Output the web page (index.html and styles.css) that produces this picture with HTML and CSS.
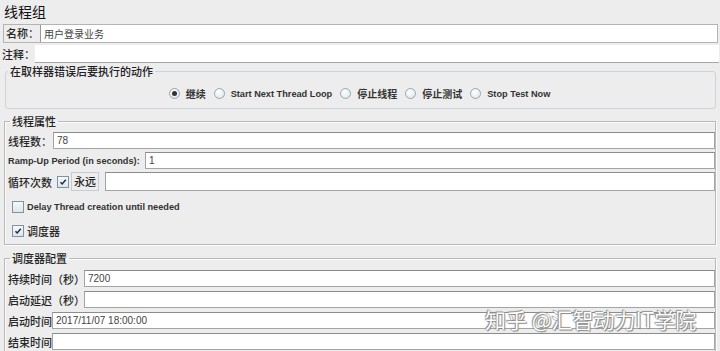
FILE: index.html
```html
<!DOCTYPE html>
<html lang="zh">
<head>
<meta charset="utf-8">
<title>线程组</title>
<link rel="stylesheet" href="styles.css">
</head>
<body>
<div class="page">
  <div class="title">线程组</div>

  <div class="name-row">
    <span class="lbl">名称：</span>
    <div class="field name-field">用户登录业务</div>
  </div>

  <div class="comment-row">
    <span class="lbl">注释：</span>
    <div class="field comment-field"></div>
  </div>

  <fieldset class="group err">
    <legend>在取样器错误后要执行的动作</legend>
    <div class="radios">
      <span class="opt"><span class="radio on"></span>继续</span>
      <span class="opt latin"><span class="radio"></span>Start Next Thread Loop</span>
      <span class="opt"><span class="radio"></span>停止线程</span>
      <span class="opt"><span class="radio"></span>停止测试</span>
      <span class="opt latin"><span class="radio"></span>Stop Test Now</span>
    </div>
  </fieldset>

  <fieldset class="group etched thread">
    <legend>线程属性</legend>
    <div class="frow r1">
      <span class="lbl">线程数：</span>
      <div class="field">78</div>
    </div>
    <div class="frow r2">
      <span class="lbl en">Ramp-Up Period (in seconds):</span>
      <div class="field">1</div>
    </div>
    <div class="frow r3">
      <span class="lbl">循环次数</span>
      <span class="check on"><svg viewBox="0 0 10 10" width="10" height="10"><path d="M2.5 5.2 L4.2 7 L7.8 2.8" fill="none" stroke="#1b2b3c" stroke-width="1.4"/></svg></span>
      <span class="forever">永远</span>
      <div class="field loop-field"></div>
    </div>
    <div class="crow delay">
      <span class="check"></span>
      <span class="en">Delay Thread creation until needed</span>
    </div>
    <div class="crow sched-toggle">
      <span class="check on"><svg viewBox="0 0 10 10" width="10" height="10"><path d="M2.5 5.2 L4.2 7 L7.8 2.8" fill="none" stroke="#1b2b3c" stroke-width="1.4"/></svg></span>
      <span class="lbl">调度器</span>
    </div>
  </fieldset>

  <fieldset class="group etched sched">
    <legend>调度器配置</legend>
    <div class="frow s1">
      <span class="lbl">持续时间（秒）</span>
      <div class="field">7200</div>
    </div>
    <div class="frow s2">
      <span class="lbl">启动延迟（秒）</span>
      <div class="field"></div>
    </div>
    <div class="frow s3">
      <span class="lbl">启动时间</span>
      <div class="field">2017/11/07 18:00:00</div>
    </div>
    <div class="frow s4">
      <span class="lbl">结束时间</span>
      <div class="field"></div>
    </div>
  </fieldset>

  <div class="watermark">知乎 @汇智动力IT学院</div>
</div>
</body>
</html>
```

FILE: styles.css
```css
html, body {
  margin: 0;
  padding: 0;
  background: #ededed;
}
.page {
  position: relative;
  width: 720px;
  height: 351px;
  overflow: hidden;
  font-family: "Noto Sans CJK SC", "Liberation Sans", sans-serif;
  font-size: 11px;
  color: #222;
  background: #ededed;
}
.title {
  height: 24px;
  line-height: 22px;
  padding-left: 4px;
  font-size: 14px;
  color: #111;
}
.lbl {
  white-space: nowrap;
  color: #262626;
  font-weight: 500;
  flex: none;
}
.en {
  font-family: "Liberation Sans", "Noto Sans CJK SC", sans-serif;
  font-weight: bold;
  font-size: 9.2px;
  color: #333;
  white-space: nowrap;
}
.field {
  background: #fff;
  border: 1px solid #a4a4a4;
  border-top-color: #8c8c8c;
  box-sizing: border-box;
  flex: 1;
  min-width: 0;
  padding-left: 3px;
  font-family: "Liberation Sans", "Noto Sans CJK SC", sans-serif;
  font-size: 10px;
  color: #444;
  line-height: 15px;
}
.name-row {
  display: flex;
  align-items: stretch;
  margin: 0 2px 0 3px;
  height: 19px;
  border: 1px solid #b4b4b4;
  box-sizing: border-box;
}
.name-row .lbl {
  width: 34px;
  padding-left: 2px;
  line-height: 17px;
}
.name-row .field {
  border: none;
  border-left: 1px solid #9a9a9a;
  font-family: "Noto Sans CJK SC", sans-serif;
  line-height: 17px;
}
.comment-row {
  display: flex;
  margin: 2px 1px 0 0;
  height: 18px;
}
.comment-row .lbl {
  width: 33px;
  padding-left: 2px;
  line-height: 18px;
}
.comment-row .field {
  border: none;
  border-bottom: 1px solid #a8a8a8;
}
.group {
  margin: 0 4px 0 4px;
  padding: 0 0 0 4px;
  min-width: 0;
}
.group legend {
  padding: 0 2px;
  margin-left: 2px;
  font-size: 11px;
  font-weight: 500;
  line-height: 14px;
  color: #222;
}
.err {
  margin-top: 1px;
  margin-left: 5px;
  height: 45px;
  border: 1px solid #cbd3db;
  border-radius: 3px;
  box-sizing: border-box;
  padding: 0;
}
.radios {
  display: flex;
  justify-content: center;
  align-items: center;
  gap: 8px;
  padding-top: 8px;
  padding-right: 2px;
}
.opt {
  display: flex;
  align-items: center;
  gap: 6px;
  font-weight: bold;
  font-size: 10px;
  color: #333;
  white-space: nowrap;
}
.opt.latin {
  font-family: "Liberation Sans", sans-serif;
  font-size: 9.2px;
}
.radio {
  display: inline-block;
  flex: none;
  width: 9px;
  height: 9px;
  border-radius: 50%;
  border: 1px solid #9aa6b2;
  background: radial-gradient(circle at 40% 35%, #ffffff 0%, #dde4ea 90%);
  position: relative;
}
.radio.on::after {
  content: "";
  position: absolute;
  left: 2px;
  top: 2px;
  width: 5px;
  height: 5px;
  border-radius: 50%;
  background: #333;
}
.etched {
  border: 1px solid #b9b9b9;
  box-shadow: inset 1px 1px 0 #fbfbfb, 1px 1px 0 #fbfbfb;
  border-radius: 0;
}
.thread {
  margin-top: 5px;
  height: 131px;
  box-sizing: border-box;
  padding: 4px 0 0 3px;
}
.frow {
  display: flex;
  align-items: center;
  height: 17px;
  margin-bottom: 3px;
}
.frow .field {
  height: 17px;
  align-self: stretch;
}
.frow .lbl {
  padding-right: 2px;
}
.r1 .lbl { width: 43px; }
.r2 .lbl { width: 135px; }
.r3 {
  height: 19px;
  margin-top: 3px;
}
.r3 .field { height: 19px; }
.r3 .lbl { width: 47px; }
.check {
  display: inline-block;
  flex: none;
  width: 10px;
  height: 10px;
  border: 1px solid #7f93a6;
  background: linear-gradient(#f6f8fa, #dfe5ea);
  box-sizing: content-box;
}
.check svg {
  display: block;
}
.forever {
  margin-left: 2px;
  margin-right: 6px;
  padding: 1px 2px;
  border: 1px solid #c4ccd4;
  line-height: 15px;
  font-weight: 500;
}
.crow {
  display: flex;
  align-items: center;
  gap: 3px;
  padding-left: 4px;
}
.delay {
  margin-top: 9px;
  height: 14px;
}
.sched-toggle {
  margin-top: 10px;
  height: 14px;
}
.sched {
  margin-top: 6px;
  height: 104px;
  box-sizing: border-box;
  padding: 5px 0 0 3px;
}
.sched .frow {
  margin-bottom: 4px;
}
.s1 .lbl, .s2 .lbl { width: 74px; }
.s3 .lbl, .s4 .lbl { width: 42px; }
.watermark {
  position: absolute;
  left: 485px;
  top: 306px;
  font-size: 21px;
  line-height: 27px;
  color: #ffffff;
  text-shadow: 0 0 1px #666, 1px 1px 1px #888, -1px -1px 1px #999;
  font-family: "Noto Sans CJK SC", sans-serif;
}
```
